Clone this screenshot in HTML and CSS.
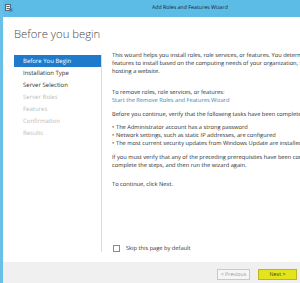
FILE: index.html
```html
<!DOCTYPE html>
<html>
<head>
<meta charset="utf-8">
<link rel="stylesheet" href="styles.css">
</head>
<body>
<div class="window">
  <div class="titlebar">
    <svg class="appicon" width="8" height="8" viewBox="0 0 8 8">
      <rect x="0.5" y="0.5" width="5" height="6" fill="#e8eef2" stroke="#5a6670" stroke-width="1"/>
      <rect x="1.5" y="2" width="3" height="1" fill="#5a6670"/>
      <rect x="1.5" y="4" width="3" height="1" fill="#5a6670"/>
      <rect x="4" y="4.5" width="3.5" height="3" fill="#3b7fc4"/>
    </svg>
    <div class="title">Add Roles and Features Wizard</div>
  </div>
  <div class="main">
    <h1 class="heading">Before you begin</h1>
    <div class="body">
      <nav class="sidebar">
        <div class="step active">Before You Begin</div>
        <div class="step">Installation Type</div>
        <div class="step">Server Selection</div>
        <div class="step disabled">Server Roles</div>
        <div class="step disabled">Features</div>
        <div class="step disabled">Confirmation</div>
        <div class="step disabled">Results</div>
      </nav>
      <div class="content">
        <p class="p-intro">This wizard helps you install roles, role services, or features. You determine which roles, role services, or<br>features to install based on the computing needs of your organization, such as sharing documents, or<br>hosting a website.</p>
        <p class="p-remove">To remove roles, role services, or features:<br><span class="link">Start the Remove Roles and Features Wizard</span></p>
        <p class="p-verify">Before you continue, verify that the following tasks have been completed:</p>
        <ul class="tasks">
          <li>The Administrator account has a strong password</li>
          <li>Network settings, such as static IP addresses, are configured</li>
          <li>The most current security updates from Windows Update are installed</li>
        </ul>
        <p class="p-must">If you must verify that any of the preceding prerequisites have been completed, close the wizard,<br>complete the steps, and then run the wizard again.</p>
        <p class="p-continue">To continue, click Next.</p>
        <label class="skip"><span class="checkbox"></span>Skip this page by default</label>
      </div>
    </div>
  </div>
  <div class="footer">
    <button class="btn prev">&lt; Previous</button>
    <button class="btn next">Next &gt;</button>
  </div>
</div>
</body>
</html>
```
FILE: styles.css
```css
html, body {
  margin: 0;
  padding: 0;
  width: 300px;
  height: 283px;
  overflow: hidden;
  background: #ffffff;
}
body {
  font-family: "Open Sans", "Noto Sans", sans-serif;
  color: #2b2b2b;
  text-rendering: geometricPrecision;
}
.window {
  width: 297px;
  height: 283px;
  border-left: 3px solid #68c0e8;
  display: flex;
  flex-direction: column;
  overflow: hidden;
}
.titlebar {
  height: 17px;
  flex: none;
  background: #5cbce6;
  display: flex;
  align-items: flex-start;
  padding-top: 4px;
  box-sizing: border-box;
}
.appicon {
  margin-left: 2px;
  flex: none;
}
.title {
  margin-left: 139px;
  font-size: 5.25px;
  line-height: 7px;
  color: #15222e;
  white-space: nowrap;
}
.main {
  flex: 1;
  display: flex;
  flex-direction: column;
  min-height: 0;
  background: #ffffff;
}
.heading {
  margin: 11px 0 9px 11px;
  font-size: 11.3px;
  line-height: 14px;
  font-weight: 300;
  color: #4a4a4a;
  white-space: nowrap;
}
.body {
  display: flex;
  flex: none;
  height: 201px;
}
.sidebar {
  width: 87px;
  margin-left: 11px;
  margin-top: 4px;
  border-right: 1px solid #dcdcdc;
  flex: none;
}
.step {
  height: 12px;
  line-height: 12px;
  padding-left: 9px;
  font-size: 6px;
  color: #2e2e2e;
  white-space: nowrap;
}
.step.active {
  background: #1f7acb;
  color: #ffffff;
}
.step.disabled {
  color: #bcbcbc;
}
.content {
  flex: 1;
  min-width: 0;
  padding-left: 10px;
  font-size: 5.7px;
  line-height: 8px;
  white-space: nowrap;
  overflow: hidden;
  display: flex;
  flex-direction: column;
}
.content p {
  margin: 0;
}
.p-remove { margin-top: 13px !important; }
.p-verify { margin-top: 6px !important; }
.link { color: #2e86b8; }
.tasks {
  list-style: none;
  margin: 5px 0 0 0;
  padding: 0;
}
.tasks li::before {
  content: "\2022";
  display: inline-block;
  width: 4px;
}
.p-must { margin-top: 6px !important; }
.p-continue { margin-top: 11px !important; }
.skip {
  margin-top: auto;
  display: flex;
  align-items: center;
  height: 8px;
  color: #333333;
}
.checkbox {
  width: 5px;
  height: 5px;
  border: 1px solid #8a8a8a;
  background: #ffffff;
  margin-left: 1px;
  margin-right: 6px;
  flex: none;
}
.footer {
  flex: none;
  height: 21px;
  margin-top: 10px;
  background: #f0f0f0;
  display: flex;
  justify-content: flex-end;
  align-items: flex-start;
  padding-top: 7px;
  padding-right: 3px;
  box-sizing: border-box;
  gap: 8px;
}
.btn {
  height: 11px;
  padding: 0;
  font-family: "Open Sans", "Noto Sans", sans-serif;
  text-rendering: geometricPrecision;
  font-size: 5.3px;
  line-height: 9px;
  border: 1px solid #c9c9c9;
  box-sizing: border-box;
}
.prev {
  width: 33px;
  background: #f6f6f6;
  color: #9a9a9a;
}
.next {
  width: 39px;
  background: #e3e41d;
  border-color: #b9b817;
  color: #3a3a10;
}
```
